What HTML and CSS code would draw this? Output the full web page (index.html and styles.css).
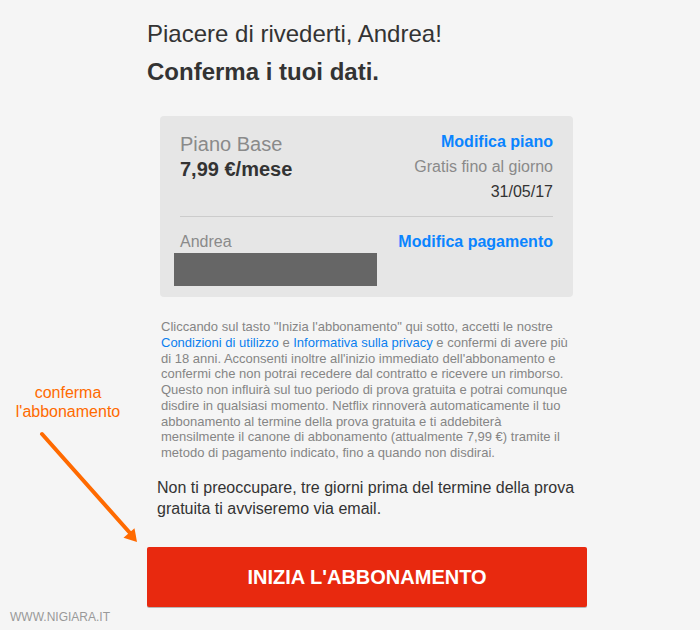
FILE: index.html
```html
<!DOCTYPE html>
<html lang="it">
<head>
<meta charset="utf-8">
<title>Conferma i tuoi dati</title>
<link rel="stylesheet" href="styles.css">
</head>
<body>
<div class="page">
  <h1 class="title">Piacere di rivederti, Andrea!</h1>
  <h2 class="subtitle">Conferma i tuoi dati.</h2>

  <div class="card">
    <div class="row">
      <div class="plan">
        <div class="plan-name">Piano Base</div>
        <div class="plan-price">7,99 €/mese</div>
      </div>
      <div class="plan-side">
        <div class="link">Modifica piano</div>
        <div class="muted">Gratis fino al giorno</div>
        <div class="date">31/05/17</div>
      </div>
    </div>
    <div class="divider"></div>
    <div class="row">
      <div class="pay">
        <div class="pay-name">Andrea</div>
        <div class="redacted"></div>
      </div>
      <div class="link pay-link">Modifica pagamento</div>
    </div>
  </div>

  <p class="fine">Cliccando sul tasto "Inizia l'abbonamento" qui sotto, accetti le nostre<br><a class="fine-link">Condizioni di utilizzo</a> e <a class="fine-link">Informativa sulla privacy</a> e confermi di avere più<br>di 18 anni. Acconsenti inoltre all'inizio immediato dell'abbonamento e<br>confermi che non potrai recedere dal contratto e ricevere un rimborso.<br>Questo non influirà sul tuo periodo di prova gratuita e potrai comunque<br>disdire in qualsiasi momento. Netflix rinnoverà automaticamente il tuo<br>abbonamento al termine della prova gratuita e ti addebiterà<br>mensilmente il canone di abbonamento (attualmente 7,99 €) tramite il<br>metodo di pagamento indicato, fino a quando non disdirai.</p>

  <p class="notice">Non ti preoccupare, tre giorni prima del termine della prova<br>gratuita ti avviseremo via email.</p>

  <button class="cta">INIZIA L'ABBONAMENTO</button>
</div>

<div class="note">conferma<br>l'abbonamento</div>
<svg class="arrow" width="700" height="630" viewBox="0 0 700 630">
  <line x1="42" y1="434" x2="130" y2="533" stroke="#ff6a00" stroke-width="4" stroke-linecap="round"/>
  <polygon points="137,542 123.5,537.8 134.5,528.2" fill="#ff6a00"/>
</svg>
<div class="watermark">WWW.NIGIARA.IT</div>
</body>
</html>
```

FILE: styles.css
```css
html, body {
  margin: 0;
  padding: 0;
  background: #f5f5f5;
}
body {
  width: 700px;
  height: 630px;
  overflow: hidden;
  position: relative;
  font-family: "Liberation Sans", Arial, sans-serif;
  color: #333;
}
.page {
  padding: 20px 0 0 147px;
  width: 440px;
}
.title {
  margin: 0;
  font-size: 24px;
  line-height: 28px;
  font-weight: normal;
  color: #333;
}
.subtitle {
  margin: 10px 0 0;
  font-size: 24px;
  line-height: 28px;
  font-weight: bold;
  color: #333;
}
.card {
  margin: 30px 0 0 13px;
  width: 373px;
  padding: 13px 20px 11px;
  background: #e6e6e6;
  border-radius: 4px;
}
.row {
  display: flex;
  justify-content: space-between;
  align-items: flex-start;
}
.plan {
  margin-top: 3px;
  font-size: 20px;
  line-height: 25px;
}
.plan-name {
  color: #8a8a8a;
}
.plan-price {
  font-weight: bold;
  color: #333;
}
.plan-side {
  text-align: right;
  font-size: 16px;
  line-height: 25px;
}
.link {
  color: #0a84ff;
  font-weight: bold;
  font-size: 16px;
}
.muted {
  color: #8a8a8a;
}
.date {
  color: #333;
}
.divider {
  margin-top: 12px;
  height: 1px;
  background: #cccccc;
}
.row + .divider + .row {
  margin-top: 15px;
}
.pay {
  font-size: 16px;
  line-height: 20px;
}
.pay-name {
  color: #8a8a8a;
}
.redacted {
  margin: 1px 0 0 -6px;
  width: 203px;
  height: 33px;
  background: #666666;
}
.pay-link {
  line-height: 20px;
}
.fine {
  margin: 22px 0 0 14px;
  width: 426px;
  font-size: 13px;
  line-height: 15.75px;
  color: #858585;
}
.fine-link {
  color: #0a7fef;
}
.notice {
  margin: 16px 0 0 10px;
  font-size: 16px;
  line-height: 21px;
  color: #333;
}
.cta {
  display: block;
  margin: 28px 0 0;
  width: 440px;
  height: 60px;
  padding: 0;
  border: 0;
  border-radius: 2px;
  background: #e8290f;
  box-shadow: 0 1px 0 rgba(0, 0, 0, 0.25);
  color: #fff;
  font-family: "Liberation Sans", Arial, sans-serif;
  font-size: 20px;
  line-height: 60px;
  font-weight: bold;
  text-align: center;
}
.note {
  position: absolute;
  left: 10px;
  top: 383px;
  width: 116px;
  text-align: center;
  font-size: 16px;
  line-height: 19px;
  color: #ff6a00;
}
.arrow {
  position: absolute;
  left: 0;
  top: 0;
  pointer-events: none;
}
.watermark {
  position: absolute;
  left: 10px;
  top: 610px;
  font-size: 12px;
  line-height: 14px;
  color: #999;
}
```
